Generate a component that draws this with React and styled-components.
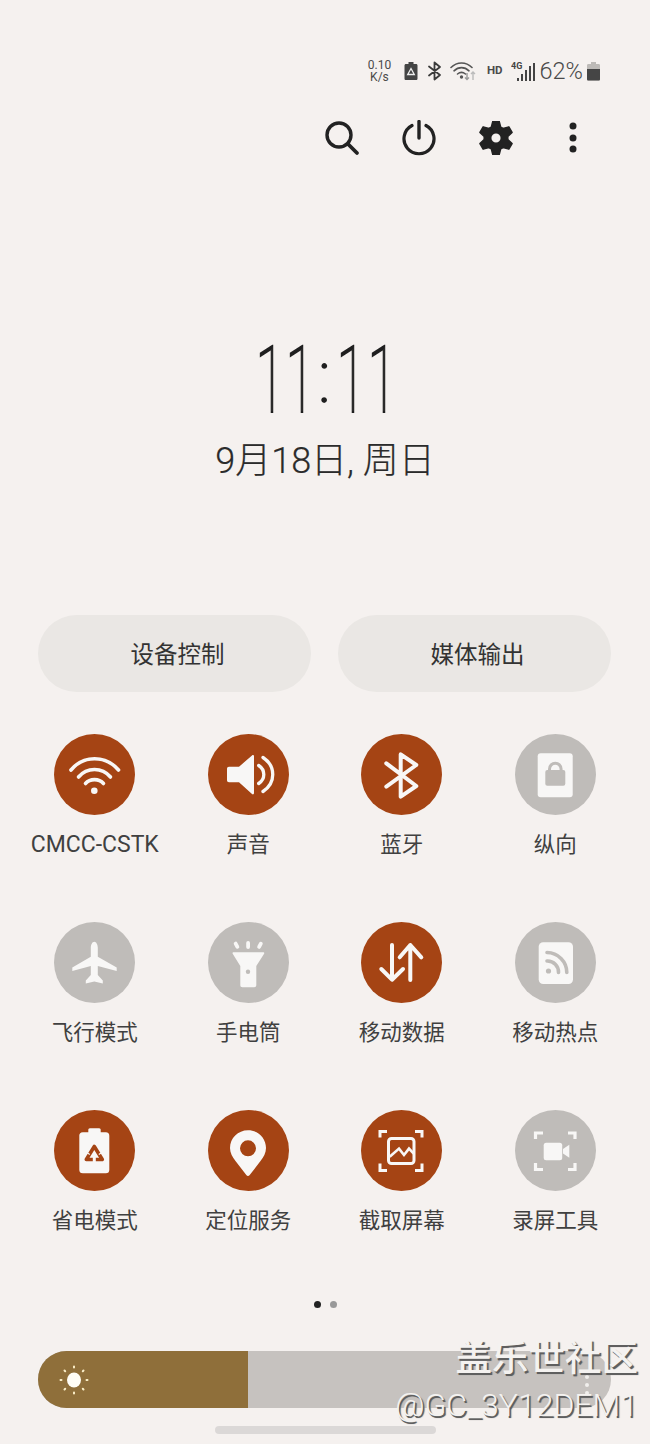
import React from "react";
import styled, { createGlobalStyle } from "styled-components";

const Global = createGlobalStyle`
  html, body { margin: 0; padding: 0; background: #f5f1ef; }
  body { font-family: "Roboto", "Noto Sans CJK SC", sans-serif; }
`;

const Page = styled.div`
  position: relative;
  width: 650px;
  height: 1444px;
  overflow: hidden;
  background: #f5f1ef;
  color: #262626;
  padding-top: 58px;
  box-sizing: border-box;
`;

const StatusBar = styled.div`
  display: flex;
  align-items: center;
  justify-content: flex-end;
  height: 26px;
  padding-right: 50px;
  color: #4a4a4a;
`;

const Speed = styled.div`
  font: 400 12px/12px "Roboto", sans-serif;
  text-align: center;
  width: 27px;
  margin-right: 11px;
`;

const StatusIcon = styled.svg`
  display: block;
  flex: none;
  margin-right: ${(p) => p.$gap ?? 0}px;
`;

const Hd = styled.span`
  font: 700 11.5px/1 "Roboto", sans-serif;
  margin-right: 8px;
`;

const Percent = styled.span`
  font: 300 23.5px/26px "Roboto", sans-serif;
  margin-right: 4px;
`;

const Actions = styled.div`
  display: flex;
  justify-content: flex-end;
  align-items: center;
  height: 40px;
  margin-top: 34px;
  padding-right: 38.5px;
`;

const ActionSlot = styled.div`
  width: 77px;
  display: flex;
  justify-content: center;
  align-items: center;
`;

const Clock = styled.div`
  margin-top: 178px;
  height: 90px;
  display: flex;
  justify-content: center;
  align-items: center;
  padding-right: 10px;
  font: 100 92px/90px "Roboto", sans-serif;
  color: #1f1f1f;
`;

const ClockDigit = styled.span`
  display: block;
  flex: none;
  width: 30.5px;
  text-align: center;
  transform: scaleX(0.58);
  -webkit-text-stroke: 1.9px #1f1f1f;
`;

const ClockColon = styled.span`
  display: block;
  flex: none;
  width: 20.5px;
  text-align: center;
  font-size: 72px;
  transform: translate(4.4px, -3px);
  -webkit-text-stroke: 1.8px #1f1f1f;
`;

const DateLine = styled.div`
  margin-top: 12px;
  text-align: center;
  font: 300 36px/46px "Roboto", "Noto Sans CJK SC", sans-serif;
  color: #2b2b2b;
  -webkit-text-stroke: 0.2px #2b2b2b;
`;

const Pills = styled.div`
  display: grid;
  grid-template-columns: 273px 273px;
  justify-content: space-between;
  margin: 131px 39px 0 38px;
`;

const Pill = styled.div`
  height: 77px;
  border-radius: 39px;
  background: #eae7e4;
  display: flex;
  align-items: center;
  justify-content: center;
  padding-left: 6px;
  font: 400 23.500px/1 "Noto Sans CJK SC", sans-serif;
  color: #333;
`;

const Grid = styled.div`
  display: grid;
  grid-template-columns: repeat(4, 153.5px);
  grid-auto-rows: 188px;
  margin: 42px 0 0 18px;
`;

const Tile = styled.div`
  display: flex;
  flex-direction: column;
  align-items: center;
`;

const Circle = styled.svg`
  display: block;
  width: 81px;
  height: 81px;
`;

const Label = styled.div`
  margin-top: 14px;
  font: 400 ${(p) => (p.$latin ? 23 : 21.5)}px/32px "Roboto", "Noto Sans CJK SC", sans-serif;
  color: #404040;
  white-space: nowrap;
`;

const Dots = styled.div`
  display: flex;
  justify-content: center;
  gap: 9px;
  margin-top: 3px;
  height: 7px;
`;

const Dot = styled.span`
  width: 7px;
  height: 7px;
  border-radius: 50%;
  background: ${(p) => (p.$on ? "#222" : "#999")};
`;

const Slider = styled.div`
  position: relative;
  display: flex;
  margin: 43px 39px 0 38px;
  height: 57px;
  border-radius: 29px;
  background: #c6c2bf;
  overflow: hidden;
`;

const Fill = styled.div`
  background: #8f6f3a;
  display: flex;
  align-items: center;
  padding-left: 20px;
  box-sizing: border-box;
`;

const MoreDots = styled.div`
  position: absolute;
  right: 22px;
  top: 24px;
  display: flex;
  flex-direction: column;
  gap: 4px;
`;

const MoreDot = styled.span`
  width: 4px;
  height: 4px;
  border-radius: 50%;
  background: #f1efed;
`;

const HomeBar = styled.div`
  width: 221px;
  height: 8px;
  border-radius: 4px;
  background: #dbd8d7;
  margin: 18px auto 0;
`;

const Watermark = styled.div`
  position: absolute;
  right: 12px;
  top: 1332px;
  text-align: right;
  color: #f4f2f0;
  text-shadow: 1.5px 1.5px 0 #5f5f5f, 2px 2px 1px #888;
  white-space: nowrap;
`;

const WmTitle = styled.div`
  font: 500 36.5px/48px "Noto Sans CJK SC", sans-serif;
`;

const WmUser = styled.div`
  font: 300 32px/40px "Roboto", sans-serif;
  margin-top: 5px;
`;

const ON = "#a54414";
const OFF = "#bfbcb9";
const W = "#f8f7f6";

const Wifi = () => (
  <g fill="none" stroke={W} strokeWidth="3.6" strokeLinecap="round">
    <path d="M17 36C29.500 21 51.500 21 64.500 36" />
    <path d="M24.500 43C33 33 48 33 56.500 43" />
    <path d="M31.500 49.500C36 44.300 45 44.300 49.500 49.500" />
    <circle cx="40.300" cy="56.700" r="3.300" fill={W} stroke="none" />
  </g>
);
const Sound = () => (
  <g>
    <path d="M21 32.700H31L44 21.500c1-.8 2-.3 2 1V59c0 1.300-1 1.800-2 1L31 48.300H21c-1.200 0-2-.8-2-2V34.700c0-1.200.8-2 2-2z" fill={W} />
    <path d="M50.700 31.500C57.500 36 57.500 45 50.700 49.500M55 23.500C68 32 68 49 55 57.500" fill="none" stroke={W} strokeWidth="3.300" strokeLinecap="round" />
  </g>
);
const Bluetooth = () => (
  <path d="M25.300 29.300L55.300 52 39.700 62.700V20.300L55.300 31 25.300 52.700" fill="none" stroke={W} strokeWidth="4" strokeLinecap="round" strokeLinejoin="round" />
);
const Portrait = () => (
  <g>
    <rect x="22.700" y="19.300" width="35" height="44" rx="3" fill={W} />
    <rect x="30.300" y="36" width="20" height="15.700" rx="2" fill={OFF} />
    <path d="M34.500 37v-2a5.800 5.800 0 0 1 11.600 0v2" fill="none" stroke={OFF} strokeWidth="3" />
  </g>
);
const Plane = () => (
  <path d="M40.300 19.700c2 0 3.500 3 3.500 6v9L62.700 45.500V49L43.800 44v9l5 5.500V61.500l-8.500-2-8.500 2V58.500l5-5.500v-9L18.300 49V45.500L36.800 34.700v-9c0-3 1.500-6 3.500-6z" fill={W} />
);
const Torch = () => (
  <g fill={W}>
    <rect x="38.200" y="19" width="3.800" height="8" rx="1.900" />
    <rect x="26.500" y="19.500" width="3.800" height="7.500" rx="1.900" transform="rotate(-28 28.400 23)" />
    <rect x="50.200" y="19.500" width="3.800" height="7.500" rx="1.900" transform="rotate(28 52 23)" />
    <path d="M25.500 30.300h29.800c.8 0 1.200.8.800 1.500L48.300 44v19c0 1.300-.8 2.300-2.300 2.300H34.500c-1.500 0-2.200-1-2.200-2.300V44L24.700 31.800c-.4-.7 0-1.500.8-1.500z" />
    <circle cx="40" cy="49.700" r="2.200" fill={OFF} />
  </g>
);
const Data = () => (
  <path d="M31 23V57.300M20.300 47L31 57.700 42 47M49.300 58V23M38.700 35.300L49.300 23 60.300 35.300" fill="none" stroke={W} strokeWidth="4" strokeLinecap="round" strokeLinejoin="round" />
);
const Hotspot = () => (
  <g>
    <rect x="23.700" y="20.300" width="34.300" height="41.700" rx="4.500" fill={W} />
    <circle cx="33.500" cy="49" r="2.600" fill={OFF} />
    <path d="M32 39A11 11 0 0 1 43.500 50.500M32 30.500A20 20 0 0 1 51.800 50.500" fill="none" stroke={OFF} strokeWidth="3.600" strokeLinecap="round" />
  </g>
);
const Saver = () => (
  <g>
    <rect x="34.300" y="18.300" width="12.400" height="6" rx="1.500" fill={W} />
    <rect x="25.300" y="22.300" width="30" height="41" rx="3.500" fill={W} />
    <path d="M40.300 36.500L48.300 49.500H32.300Z" fill="none" stroke={ON} strokeWidth="3.600" strokeLinejoin="round" />
    <rect x="38.800" y="47" width="3" height="5.200" fill={W} />
    <path d="M33.200 42.800l2.600 1.600M47.400 42.800l-2.600 1.600" stroke={W} strokeWidth="1.200" />
  </g>
);
const Pin = () => (
  <path fillRule="evenodd" d="M40 20.300c10 0 18 7.800 18 17.800 0 5-2.500 9.200-5.500 13L41.700 65c-.9 1.300-2.500 1.300-3.400 0L27.500 51.100c-3-3.800-5.500-8-5.500-13 0-10 8-17.800 18-17.800zm0 10a8 8 0 1 0 0 16 8 8 0 0 0 0-16z" fill={W} />
);
const Screenshot = () => (
  <g fill="none" stroke={W} strokeWidth="3">
    <path d="M19 27.500V21.500H26M54 21.500H61V27.500M19 53.500V60.500H26M54 60.500H61V53.500" />
    <rect x="27.500" y="28.500" width="25.500" height="25" rx="3" />
    <path d="M28.700 46.700L38 38.600 43 45l5-6.400 4.700 5" strokeWidth="2.600" />
  </g>
);
const Record = () => (
  <g fill="none" stroke={W} strokeWidth="3.200">
    <path d="M20.500 29V23H28M53 23H60V29M20.500 53V59.500H28M53 59.500H60V53" />
    <rect x="28.700" y="32.700" width="18.500" height="17.500" rx="2.500" fill={W} stroke="none" />
    <path d="M48 39l6.300-4.300v13L48 43.500z" fill={W} stroke="none" />
  </g>
);

const tiles = [
  ["CMCC-CSTK", true, Wifi, true],
  ["声音", true, Sound],
  ["蓝牙", true, Bluetooth],
  ["纵向", false, Portrait],
  ["飞行模式", false, Plane],
  ["手电筒", false, Torch],
  ["移动数据", true, Data],
  ["移动热点", false, Hotspot],
  ["省电模式", true, Saver],
  ["定位服务", true, Pin],
  ["截取屏幕", true, Screenshot],
  ["录屏工具", false, Record],
];

function gearPath() {
  const cx = 16, cy = 16;
  let d = "";
  for (let i = 0; i < 6; i++) {
    const a = (i * Math.PI) / 3 - Math.PI / 2;
    const pts = [
      [-0.40, 11.2],
      [-0.19, 16],
      [0.19, 16],
      [0.40, 11.2],
    ];
    pts.forEach(([o, r], j) => {
      const x = (cx + r * Math.cos(a + o)).toFixed(2);
      const y = (cy + r * Math.sin(a + o)).toFixed(2);
      d += `${i === 0 && j === 0 ? "M" : "L"}${x} ${y}`;
    });
  }
  return `${d}ZM16 11a5 5 0 1 0 0 10 5 5 0 0 0 0-10z`;
}

export default function App() {
  return (
    <Page>
      <Global />
      <StatusBar>
        <Speed>0.10<br />K/s</Speed>
        <StatusIcon width="14" height="20" viewBox="0 0 14 20" $gap={9}>
          <path d="M4.500 1h5v2H12c1 0 1.500.6 1.500 1.500v13c0 1-.6 1.500-1.500 1.500H2c-1 0-1.500-.5-1.500-1.500v-13C.5 3.600 1 3 2 3h2.500z" fill="#444" />
          <path d="M7 7.500l3.300 6H3.700z" fill="none" stroke="#eee" strokeWidth="1.300" />
        </StatusIcon>
        <StatusIcon width="16" height="20" viewBox="0 0 16 20" $gap={7}>
          <path d="M2 5.500L13 14 7.500 18.500V1.500L13 6 2 14.500" fill="none" stroke="#3a3a3a" strokeWidth="1.800" strokeLinejoin="round" strokeLinecap="round" />
        </StatusIcon>
        <StatusIcon width="27" height="22" viewBox="0 0 27 22" $gap={10}>
          <g fill="none" stroke="#555" strokeWidth="1.600" strokeLinecap="round">
            <path d="M1 7.500C7 1.500 16 1.500 22 7.500" />
            <path d="M4 10.800C8.500 6.500 14.500 6.500 19 10.800" />
            <path d="M7.500 14C10 12 13 12 15.500 14" />
          </g>
          <circle cx="11.500" cy="17" r="1.700" fill="#555" />
          <path d="M17 13v6.500M15 17.500l2 2 2-2" fill="none" stroke="#999" strokeWidth="1.400" />
          <path d="M23 20V12M21 14l2-2 2 2" fill="none" stroke="#bbb" strokeWidth="1.400" />
        </StatusIcon>
        <Hd>HD</Hd>
        <StatusIcon width="24" height="22" viewBox="0 0 24 22" $gap={5}>
          <text x="0" y="8.500" fontFamily="Roboto, sans-serif" fontWeight="700" fontSize="9" fill="#444">4G</text>
          <g fill="#444">
            <rect x="6" y="18" width="2" height="3" />
            <rect x="10" y="14" width="2" height="7" />
            <rect x="14" y="10" width="2" height="11" />
            <rect x="18" y="6" width="2" height="15" />
            <rect x="22" y="3" width="2" height="18" />
          </g>
        </StatusIcon>
        <Percent>62%</Percent>
        <StatusIcon width="13" height="20" viewBox="0 0 13 20">
          <path d="M4 1h5v2h2.500c1 0 1.500.5 1.500 1.500v13.500c0 1-.5 1.500-1.500 1.500h-10C.5 19.500 0 19 0 18V4.500C0 3.500.5 3 1.500 3H4z" fill="#bdbab7" />
          <path d="M0 8h13v10c0 1-.5 1.500-1.500 1.500h-10C.5 19.500 0 19 0 18z" fill="#454545" />
        </StatusIcon>
      </StatusBar>

      <Actions>
        <ActionSlot>
          <svg width="36" height="36" viewBox="0 0 36 36" fill="none" stroke="#222" strokeWidth="3.400" strokeLinecap="round">
            <circle cx="15" cy="15" r="12" />
            <path d="M24 24L33 33" strokeWidth="3.800" />
          </svg>
        </ActionSlot>
        <ActionSlot>
          <svg width="34" height="36" viewBox="0 0 34 36" fill="none" stroke="#222" strokeWidth="3.200" strokeLinecap="round">
            <path d="M10 5.500A15 15 0 1 0 24 5.500" />
            <path d="M17 1.500V18" strokeWidth="3.400" />
          </svg>
        </ActionSlot>
        <ActionSlot>
          <svg width="34" height="34" viewBox="0 0 32 32">
            <path d={gearPath()} fill="#222" fillRule="evenodd" stroke="#222" strokeWidth="1.400" strokeLinejoin="round" />
          </svg>
        </ActionSlot>
        <ActionSlot>
          <svg width="8" height="32" viewBox="0 0 8 32" fill="#222">
            <circle cx="4" cy="4" r="3.500" />
            <circle cx="4" cy="16" r="3.500" />
            <circle cx="4" cy="27" r="3.500" />
          </svg>
        </ActionSlot>
      </Actions>

      <Clock>
        <ClockDigit>1</ClockDigit>
        <ClockDigit>1</ClockDigit>
        <ClockColon>:</ClockColon>
        <ClockDigit>1</ClockDigit>
        <ClockDigit>1</ClockDigit>
      </Clock>
      <DateLine>9月18日, 周日</DateLine>

      <Pills>
        <Pill>设备控制</Pill>
        <Pill>媒体输出</Pill>
      </Pills>

      <Grid>
        {tiles.map(([label, on, Icon, latin]) => (
          <Tile key={label}>
            <Circle viewBox="0 0 81 81">
              <circle cx="40.500" cy="40.500" r="40.500" fill={on ? ON : OFF} />
              <Icon />
            </Circle>
            <Label $latin={latin}>{label}</Label>
          </Tile>
        ))}
      </Grid>

      <Dots>
        <Dot $on />
        <Dot />
      </Dots>

      <Slider>
        <Fill style={{ width: `${(210 / 573) * 100}%` }}>
          <svg width="32" height="32" viewBox="0 0 32 32">
            <ellipse cx="16" cy="16" rx="7" ry="7.500" fill="#fffdf5" />
            <g stroke="#fbefc8" strokeWidth="2" strokeLinecap="round">
              <path d="M16 2.500v1M16 28.500v1M2.500 16h1M28.500 16h1M6.500 6.500l.7.7M24.800 24.800l.7.7M6.500 25.500l.7-.7M24.800 7.200l.7-.7" />
            </g>
          </svg>
        </Fill>
        <MoreDots>
          <MoreDot />
          <MoreDot />
          <MoreDot />
        </MoreDots>
      </Slider>

      <HomeBar />

      <Watermark>
        <WmTitle>盖乐世社区</WmTitle>
        <WmUser>@GC_3Y12DEM1</WmUser>
      </Watermark>
    </Page>
  );
}
